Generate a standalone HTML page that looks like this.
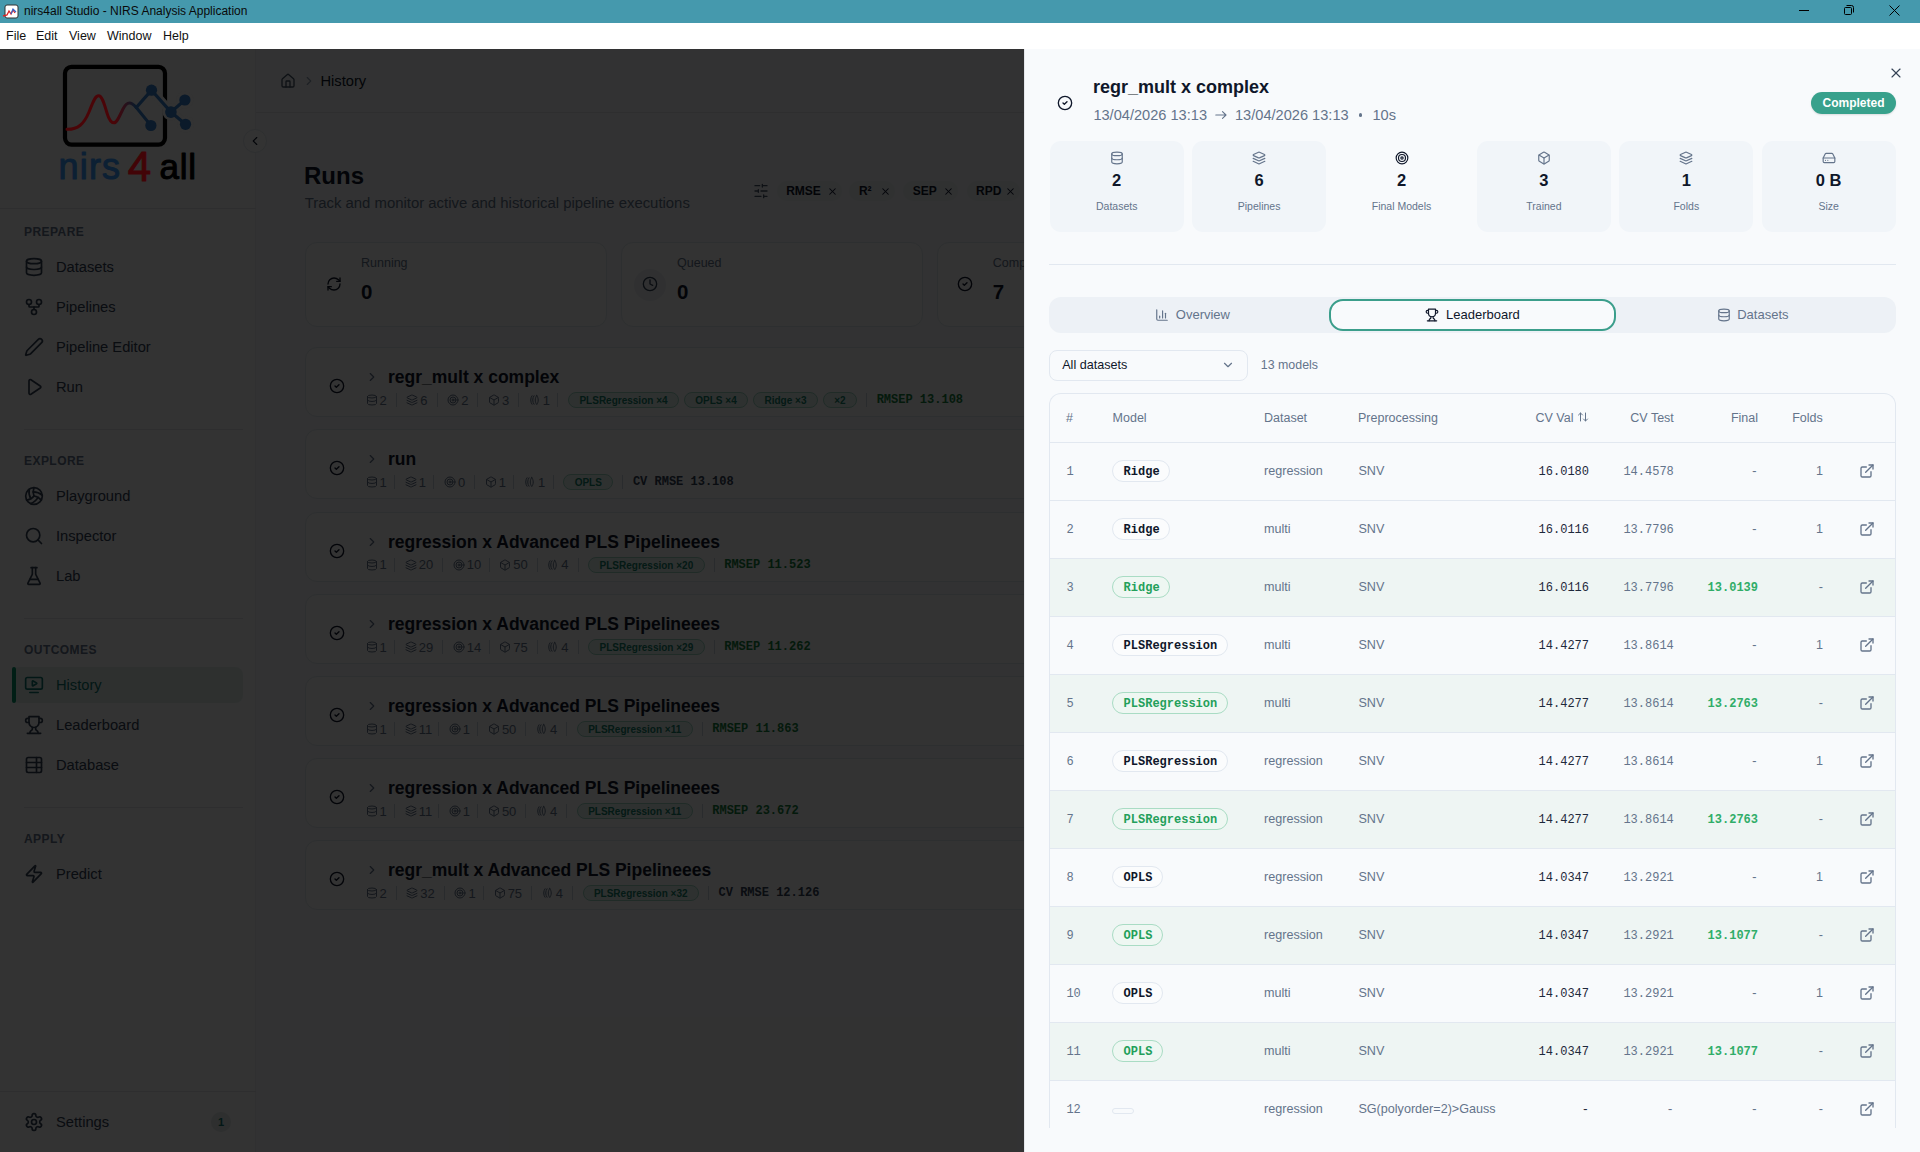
<!DOCTYPE html><html><head><meta charset="utf-8"><style>*{box-sizing:border-box;margin:0;padding:0}
html,body{width:1920px;height:1152px;overflow:hidden;background:#f8fafc;font-family:"Liberation Sans",sans-serif;color:#0f172a}
.abs{position:absolute}
svg{display:block;overflow:visible}
.ic{fill:none;stroke:currentColor;stroke-linecap:round;stroke-linejoin:round}
.mono{font-family:"Liberation Mono",monospace}
.tx{position:absolute;line-height:1;white-space:nowrap}
#titlebar{position:absolute;left:0;top:0;width:1920px;height:23px;background:#4599ad}
#titlebar .t{position:absolute;left:24px;top:5px;font-size:12px;line-height:1;color:#0a0a0a;white-space:nowrap}
#menubar{position:absolute;left:0;top:23px;width:1920px;height:26px;background:#fff}
#menubar span{position:absolute;top:7px;font-size:12.5px;line-height:1;color:#111}
#app{position:absolute;left:0;top:49px;width:1920px;height:1103px;background:#f8fafc;overflow:hidden}
#dim{position:absolute;left:0;top:0;width:1024px;height:1103px;background:rgba(0,0,0,0.8)}
#sidebar{position:absolute;left:0;top:0;width:256px;height:1103px;background:#fcfcfd;border-right:1px solid #edeff2}
.sec{position:absolute;left:24px;font-size:12px;line-height:1;font-weight:bold;letter-spacing:0.45px;color:#64748b}
.nav{position:absolute;left:24px;height:20px;width:220px;color:#1e293b}
.nav span{position:absolute;left:32px;top:3px;font-size:14.7px;line-height:1;white-space:nowrap}
.sep{position:absolute;left:24px;width:219px;height:1px;background:#e5e7eb}
.card{position:absolute;background:#fdfdfe;border:1px solid #e2e8f0;border-radius:12px}
.chip{position:absolute;height:20px;border-radius:10px;background:#eef2f6;font-size:12px;font-weight:bold;color:#0f172a}
.run .ttl{position:absolute;left:82px;top:21.2px;font-size:17.5px;line-height:1;font-weight:bold;white-space:nowrap;color:#0f172a}
.meta{position:absolute;left:59.5px;top:44px;height:16px;display:flex;align-items:center;white-space:nowrap;font-size:13px;color:#64748b}
.mi{display:flex;align-items:center;gap:2px}
.mi b{font-weight:normal;line-height:1}
.vs{display:block;width:1px;height:14px;background:#cbd5e1;margin:0 9.6px 0 9px}
.pill{display:block;height:16px;border-radius:8px;border:1px solid #9fd6c4;background:#e7f5ef;color:#15806a;font-size:10px;font-weight:bold;line-height:15.5px;padding:0 10.4px;margin-right:5px}
.metric{font-family:"Liberation Mono",monospace;font-weight:bold;font-size:12px;line-height:1}
#panel{position:absolute;left:1024px;top:0;width:896px;height:1103px;background:#f8fafc;border-left:1px solid #e2e8f0}
</style></head><body>
<div id="titlebar">
<svg class="abs" style="left:2px;top:4px;width:17px;height:15px" viewBox="0 0 17 15"><rect x="3" y="1" width="13" height="13" rx="2" fill="#fff" stroke="#333" stroke-width="1"/><path d="M1 12 L5 11 L7 7 L9 10 L11 6 L13 9" fill="none" stroke="#d22" stroke-width="1.3"/><path d="M9 10 L11 5 L14 8" fill="none" stroke="#36c" stroke-width="1.2"/></svg>
<div class="t">nirs4all Studio - NIRS Analysis Application</div>
<div class="abs" style="left:1799px;top:10px;width:10px;height:1px;background:#000"></div>
<svg class="abs" style="left:1843px;top:4px;width:12px;height:12px" viewBox="0 0 12 12"><rect x="1.5" y="3.5" width="7" height="7" rx="1" fill="none" stroke="#000" stroke-width="1"/><path d="M3.5 1.5h5a2 2 0 0 1 2 2v5" fill="none" stroke="#000" stroke-width="1"/></svg>
<svg class="abs" style="left:1889px;top:5px;width:11px;height:11px" viewBox="0 0 11 11"><path d="M0.5 0.5L10.5 10.5M10.5 0.5L0.5 10.5" stroke="#000" stroke-width="1"/></svg>
</div>
<div id="menubar"><span style="left:6px">File</span><span style="left:36px">Edit</span><span style="left:69px">View</span><span style="left:107px">Window</span><span style="left:163px">Help</span></div>
<div id="app">
<div id="sidebar">
<div class="abs" style="left:0;top:159px;width:256px;height:1px;background:#e5e7eb"></div>
<div class="sec" style="top:177.4px">PREPARE</div>
<div class="nav" style="top:208px;color:#334155"><svg class="abs ic" style="left:0px;top:0px;width:20px;height:20px;" viewBox="0 0 24 24" stroke-width="2"><ellipse cx="12" cy="5" rx="9" ry="3"/><path d="M3 5V19A9 3 0 0 0 21 19V5"/><path d="M3 12A9 3 0 0 0 21 12"/></svg><span>Datasets</span></div>
<div class="nav" style="top:248px;color:#334155"><svg class="abs ic" style="left:0px;top:0px;width:20px;height:20px;" viewBox="0 0 24 24" stroke-width="2"><circle cx="12" cy="18" r="3"/><circle cx="6" cy="6" r="3"/><circle cx="18" cy="6" r="3"/><path d="M18 9v2c0 .6-.4 1-1 1H7c-.6 0-1-.4-1-1V9"/><path d="M12 12v3"/></svg><span>Pipelines</span></div>
<div class="nav" style="top:288px;color:#334155"><svg class="abs ic" style="left:0px;top:0px;width:20px;height:20px;" viewBox="0 0 24 24" stroke-width="2"><path d="M21.174 6.812a1 1 0 0 0-3.986-3.987L3.842 16.174a2 2 0 0 0-.5.83l-1.321 4.352a.5.5 0 0 0 .623.622l4.353-1.32a2 2 0 0 0 .83-.497z"/></svg><span>Pipeline Editor</span></div>
<div class="nav" style="top:328px;color:#334155"><svg class="abs ic" style="left:0px;top:0px;width:20px;height:20px;" viewBox="0 0 24 24" stroke-width="2"><path d="M6 4.5a1.5 1.5 0 0 1 2.3-1.27l11.2 7.5a1.5 1.5 0 0 1 0 2.54l-11.2 7.5A1.5 1.5 0 0 1 6 19.5z"/></svg><span>Run</span></div>
<div class="sep" style="top:380px"></div>
<div class="sec" style="top:406.4px">EXPLORE</div>
<div class="nav" style="top:437px;color:#334155"><svg class="abs ic" style="left:0px;top:0px;width:20px;height:20px;" viewBox="0 0 24 24" stroke-width="2"><path d="M11.1 7.1a16.55 16.55 0 0 1 10.9 4"/><path d="M12 12a12.6 12.6 0 0 1-8.7 5"/><path d="M16.8 13.6a16.55 16.55 0 0 1-9 7.5"/><path d="M20.7 17a12.8 12.8 0 0 0-8.7-5 13.3 13.3 0 0 1 0-10"/><path d="M6.3 3.8a16.55 16.55 0 0 0 1.9 11.5"/><circle cx="12" cy="12" r="10"/></svg><span>Playground</span></div>
<div class="nav" style="top:477px;color:#334155"><svg class="abs ic" style="left:0px;top:0px;width:20px;height:20px;" viewBox="0 0 24 24" stroke-width="2"><circle cx="11" cy="11" r="8"/><path d="m21 21-4.3-4.3"/></svg><span>Inspector</span></div>
<div class="nav" style="top:517px;color:#334155"><svg class="abs ic" style="left:0px;top:0px;width:20px;height:20px;" viewBox="0 0 24 24" stroke-width="2"><path d="M10 2v7.527a2 2 0 0 1-.211.896L4.72 20.55a1 1 0 0 0 .9 1.45h12.76a1 1 0 0 0 .9-1.45l-5.069-10.127A2 2 0 0 1 14 9.527V2"/><path d="M8.5 2h7"/><path d="M7 16h10"/></svg><span>Lab</span></div>
<div class="sep" style="top:569px"></div>
<div class="sec" style="top:594.9px">OUTCOMES</div>
<div class="abs" style="left:12px;top:618px;width:231px;height:36px;border-radius:8px;background:#e3f1ec"></div>
<div class="abs" style="left:12px;top:618px;width:4px;height:36px;border-radius:2px;background:#059669"></div>
<div class="nav" style="top:626px;color:#0f766e"><svg class="abs ic" style="left:0px;top:0px;width:20px;height:20px;" viewBox="0 0 24 24" stroke-width="2"><path d="M15.033 9.44a.647.647 0 0 1 0 1.12l-4.065 2.352a.645.645 0 0 1-.968-.56V7.648a.646.646 0 0 1 .967-.56z"/><path d="M7 21h10"/><rect width="20" height="14" x="2" y="3" rx="2"/></svg><span>History</span></div>
<div class="nav" style="top:666px;color:#334155"><svg class="abs ic" style="left:0px;top:0px;width:20px;height:20px;" viewBox="0 0 24 24" stroke-width="2"><path d="M6 9H4.5a2.5 2.5 0 0 1 0-5H6"/><path d="M18 9h1.5a2.5 2.5 0 0 0 0-5H18"/><path d="M4 22h16"/><path d="M10 14.66V17c0 .55-.47.98-.97 1.21C7.85 18.75 7 20.24 7 22"/><path d="M14 14.66V17c0 .55.47.98.97 1.21C16.15 18.75 17 20.24 17 22"/><path d="M18 2H6v7a6 6 0 0 0 12 0V2Z"/></svg><span>Leaderboard</span></div>
<div class="nav" style="top:706px;color:#334155"><svg class="abs ic" style="left:0px;top:0px;width:20px;height:20px;" viewBox="0 0 24 24" stroke-width="2"><path d="M15 3v18"/><rect width="18" height="18" x="3" y="3" rx="2"/><path d="M21 9H3"/><path d="M21 15H3"/></svg><span>Database</span></div>
<div class="sep" style="top:758px"></div>
<div class="sec" style="top:784.4px">APPLY</div>
<div class="nav" style="top:815px;color:#334155"><svg class="abs ic" style="left:0px;top:0px;width:20px;height:20px;" viewBox="0 0 24 24" stroke-width="2"><path d="M4 14a1 1 0 0 1-.78-1.63l9.9-10.2a.5.5 0 0 1 .86.46l-1.92 6.02A1 1 0 0 0 13 10h7a1 1 0 0 1 .78 1.63l-9.9 10.2a.5.5 0 0 1-.86-.46l1.92-6.02A1 1 0 0 0 11 14z"/></svg><span>Predict</span></div>
<div class="abs" style="left:0;top:1042px;width:256px;height:1px;background:#e5e7eb"></div>
<div class="nav" style="top:1063px;color:#334155"><svg class="abs ic" style="left:0px;top:0px;width:20px;height:20px;" viewBox="0 0 24 24" stroke-width="2"><path d="M12.22 2h-.44a2 2 0 0 0-2 2v.18a2 2 0 0 1-1 1.73l-.43.25a2 2 0 0 1-2 0l-.15-.08a2 2 0 0 0-2.73.73l-.22.38a2 2 0 0 0 .73 2.73l.15.1a2 2 0 0 1 1 1.72v.51a2 2 0 0 1-1 1.74l-.15.09a2 2 0 0 0-.73 2.73l.22.38a2 2 0 0 0 2.73.73l.15-.08a2 2 0 0 1 2 0l.43.25a2 2 0 0 1 1 1.73V20a2 2 0 0 0 2 2h.44a2 2 0 0 0 2-2v-.18a2 2 0 0 1 1-1.73l.43-.25a2 2 0 0 1 2 0l.15.08a2 2 0 0 0 2.73-.73l.22-.39a2 2 0 0 0-.73-2.73l-.15-.08a2 2 0 0 1-1-1.74v-.5a2 2 0 0 1 1-1.74l.15-.09a2 2 0 0 0 .73-2.73l-.22-.38a2 2 0 0 0-2.73-.73l-.15.08a2 2 0 0 1-2 0l-.43-.25a2 2 0 0 1-1-1.73V4a2 2 0 0 0-2-2z"/><circle cx="12" cy="12" r="3"/></svg><span>Settings</span></div>
<div class="abs" style="left:211px;top:1063px;width:20px;height:20px;border-radius:10px;background:#e3e9e8;font-size:11px;font-weight:bold;text-align:center;line-height:20px;color:#0f766e">1</div>
</div>
<div class="abs" style="left:243px;top:80px;width:24px;height:24px;border-radius:12px;background:#fff;border:1px solid #e2e8f0"></div>
<svg class="abs ic" style="left:248px;top:85px;width:14px;height:14px;color:#0f172a;" viewBox="0 0 24 24" stroke-width="2"><path d="m15 18-6-6 6-6"/></svg>
<div class="abs" style="left:256px;top:63px;width:800px;height:1px;background:#e5e7eb"></div>
<svg class="abs ic" style="left:280px;top:23.5px;width:16px;height:16px;color:#475569;" viewBox="0 0 24 24" stroke-width="2"><path d="M15 21v-8a1 1 0 0 0-1-1h-4a1 1 0 0 0-1 1v8"/><path d="M3 10a2 2 0 0 1 .709-1.528l7-5.999a2 2 0 0 1 2.582 0l7 5.999A2 2 0 0 1 21 10v9a2 2 0 0 1-2 2H5a2 2 0 0 1-2-2z"/></svg>
<svg class="abs ic" style="left:302px;top:25px;width:14px;height:14px;color:#94a3b8;" viewBox="0 0 24 24" stroke-width="2"><path d="m9 18 6-6-6-6"/></svg>
<div class="abs" style="left:320.5px;top:24px;font-size:14.7px;color:#0f172a;white-space:nowrap">History</div>
<div class="abs" style="left:304px;top:113px;font-size:24px;font-weight:bold;color:#0f172a;white-space:nowrap">Runs</div>
<div class="abs" style="left:304.7px;top:146px;font-size:14.9px;color:#64748b;white-space:nowrap">Track and monitor active and historical pipeline executions</div>
<svg class="abs ic" style="left:752.5px;top:134px;width:16px;height:16px;color:#475569;" viewBox="0 0 24 24" stroke-width="2"><path d="M21 4h-7M10 4H3M21 12h-9M8 12H3M21 20h-5M12 20H3M14 2v4M8 10v4M16 18v4"/></svg>
<div class="chip" style="left:776.7px;top:132px;width:65.59999999999991px"><span style="position:absolute;left:9.5px;top:3px">RMSE</span><svg class="abs ic" style="left:50.29999999999991px;top:4.5px;width:11px;height:11px;color:#0f172a;" viewBox="0 0 24 24" stroke-width="2.2"><path d="M18 6 6 18"/><path d="m6 6 12 12"/></svg></div>
<div class="chip" style="left:849.4px;top:132px;width:46.10000000000002px"><span style="position:absolute;left:9.5px;top:3px">R²</span><svg class="abs ic" style="left:30.800000000000022px;top:4.5px;width:11px;height:11px;color:#0f172a;" viewBox="0 0 24 24" stroke-width="2.2"><path d="M18 6 6 18"/><path d="m6 6 12 12"/></svg></div>
<div class="chip" style="left:903.3px;top:132px;width:54.700000000000045px"><span style="position:absolute;left:9.5px;top:3px">SEP</span><svg class="abs ic" style="left:39.40000000000005px;top:4.5px;width:11px;height:11px;color:#0f172a;" viewBox="0 0 24 24" stroke-width="2.2"><path d="M18 6 6 18"/><path d="m6 6 12 12"/></svg></div>
<div class="chip" style="left:966.6px;top:132px;width:53.89999999999998px"><span style="position:absolute;left:9.5px;top:3px">RPD</span><svg class="abs ic" style="left:38.59999999999998px;top:4.5px;width:11px;height:11px;color:#0f172a;" viewBox="0 0 24 24" stroke-width="2.2"><path d="M18 6 6 18"/><path d="m6 6 12 12"/></svg></div>
<div class="card" style="left:305px;top:193px;width:302px;height:84.5px">
<svg class="abs ic" style="left:19.5px;top:32.5px;width:16px;height:16px;color:#0f172a;" viewBox="0 0 24 24" stroke-width="2"><path d="M3 12a9 9 0 0 1 9-9 9.75 9.75 0 0 1 6.74 2.74L21 8"/><path d="M21 3v5h-5"/><path d="M21 12a9 9 0 0 1-9 9 9.75 9.75 0 0 1-6.74-2.74L3 16"/><path d="M8 16H3v5"/></svg>
<div class="abs" style="left:55px;top:13px;font-size:12.5px;color:#64748b">Running</div>
<div class="abs" style="left:55px;top:37px;font-size:20.5px;font-weight:bold;color:#0f172a">0</div>
</div>
<div class="card" style="left:621px;top:193px;width:302px;height:84.5px">
<div class="abs" style="left:12px;top:25.5px;width:32px;height:32px;border-radius:16px;background:#eef1f5"></div>
<svg class="abs ic" style="left:19.5px;top:32.5px;width:16px;height:16px;color:#334155;" viewBox="0 0 24 24" stroke-width="2"><circle cx="12" cy="12" r="10"/><path d="M12 6v6l4 2"/></svg>
<div class="abs" style="left:55px;top:13px;font-size:12.5px;color:#64748b">Queued</div>
<div class="abs" style="left:55px;top:37px;font-size:20.5px;font-weight:bold;color:#0f172a">0</div>
</div>
<div class="card" style="left:936.8px;top:193px;width:302px;height:84.5px">
<svg class="abs ic" style="left:19.5px;top:32.5px;width:16px;height:16px;color:#0f172a;" viewBox="0 0 24 24" stroke-width="2"><circle cx="12" cy="12" r="10"/><path d="m9 12 2 2 4-4"/></svg>
<div class="abs" style="left:55px;top:13px;font-size:12.5px;color:#64748b">Completed</div>
<div class="abs" style="left:55px;top:37px;font-size:20.5px;font-weight:bold;color:#0f172a">7</div>
</div>
<div class="card run" style="left:305px;top:298px;width:900px;height:70px">
<svg class="abs ic" style="left:23px;top:30px;width:16px;height:16px;color:#0f172a;" viewBox="0 0 24 24" stroke-width="2"><circle cx="12" cy="12" r="10"/><path d="m9 12 2 2 4-4"/></svg>
<svg class="abs ic" style="left:59px;top:22px;width:14px;height:14px;color:#64748b;" viewBox="0 0 24 24" stroke-width="2"><path d="m9 18 6-6-6-6"/></svg>
<div class="ttl">regr_mult x complex</div>
<div class="meta">
<span class="mi"><svg class="ic" style="width:12px;height:12px" viewBox="0 0 24 24" stroke-width="2"><ellipse cx="12" cy="5" rx="9" ry="3"/><path d="M3 5V19A9 3 0 0 0 21 19V5"/><path d="M3 12A9 3 0 0 0 21 12"/></svg><b style="margin-right:-0.0px">2</b></span><i class="vs"></i>
<span class="mi"><svg class="ic" style="width:12px;height:12px" viewBox="0 0 24 24" stroke-width="2"><path d="M12.83 2.18a2 2 0 0 0-1.66 0L2.6 6.08a1 1 0 0 0 0 1.83l8.58 3.91a2 2 0 0 0 1.66 0l8.58-3.9a1 1 0 0 0 0-1.83Z"/><path d="m22 17.65-9.17 4.16a2 2 0 0 1-1.66 0L2 17.65"/><path d="m22 12.65-9.17 4.16a2 2 0 0 1-1.66 0L2 12.65"/></svg><b style="margin-right:-0.0px">6</b></span><i class="vs"></i>
<span class="mi"><svg class="ic" style="width:12px;height:12px" viewBox="0 0 24 24" stroke-width="2"><circle cx="12" cy="12" r="10"/><circle cx="12" cy="12" r="6"/><circle cx="12" cy="12" r="2"/></svg><b style="margin-right:-0.0px">2</b></span><i class="vs"></i>
<span class="mi"><svg class="ic" style="width:12px;height:12px" viewBox="0 0 24 24" stroke-width="2"><path d="M21 8a2 2 0 0 0-1-1.73l-7-4a2 2 0 0 0-2 0l-7 4A2 2 0 0 0 3 8v8a2 2 0 0 0 1 1.73l7 4a2 2 0 0 0 2 0l7-4A2 2 0 0 0 21 16Z"/><path d="m3.3 7 8.7 5 8.7-5"/><path d="M12 22V12"/></svg><b style="margin-right:-0.0px">3</b></span><i class="vs"></i>
<span class="mi"><svg class="ic" style="width:12px;height:12px" viewBox="0 0 24 24" stroke-width="2"><path d="M6 3.5C2.5 8 2.5 16 6 20.5"/><path d="M10 3.5C6.5 8 6.5 16 10 20.5"/><path d="M15.5 3C11.5 8 11.5 16 15.5 21C19.5 16 19.5 8 15.5 3z"/></svg><b style="margin-right:-1.6px">1</b></span><i class="vs"></i>
<span class="pill" style="margin-right:5px">PLSRegression ×4</span>
<span class="pill" style="margin-right:5px">OPLS ×4</span>
<span class="pill" style="margin-right:5px">Ridge ×3</span>
<span class="pill" style="margin-right:0px">×2</span>
<i class="vs"></i><span class="metric" style="color:#15803d">RMSEP 13.108</span>
</div></div>
<div class="card run" style="left:305px;top:380px;width:900px;height:70px">
<svg class="abs ic" style="left:23px;top:30px;width:16px;height:16px;color:#0f172a;" viewBox="0 0 24 24" stroke-width="2"><circle cx="12" cy="12" r="10"/><path d="m9 12 2 2 4-4"/></svg>
<svg class="abs ic" style="left:59px;top:22px;width:14px;height:14px;color:#64748b;" viewBox="0 0 24 24" stroke-width="2"><path d="m9 18 6-6-6-6"/></svg>
<div class="ttl">run</div>
<div class="meta">
<span class="mi"><svg class="ic" style="width:12px;height:12px" viewBox="0 0 24 24" stroke-width="2"><ellipse cx="12" cy="5" rx="9" ry="3"/><path d="M3 5V19A9 3 0 0 0 21 19V5"/><path d="M3 12A9 3 0 0 0 21 12"/></svg><b style="margin-right:-1.6px">1</b></span><i class="vs"></i>
<span class="mi"><svg class="ic" style="width:12px;height:12px" viewBox="0 0 24 24" stroke-width="2"><path d="M12.83 2.18a2 2 0 0 0-1.66 0L2.6 6.08a1 1 0 0 0 0 1.83l8.58 3.91a2 2 0 0 0 1.66 0l8.58-3.9a1 1 0 0 0 0-1.83Z"/><path d="m22 17.65-9.17 4.16a2 2 0 0 1-1.66 0L2 17.65"/><path d="m22 12.65-9.17 4.16a2 2 0 0 1-1.66 0L2 12.65"/></svg><b style="margin-right:-1.6px">1</b></span><i class="vs"></i>
<span class="mi"><svg class="ic" style="width:12px;height:12px" viewBox="0 0 24 24" stroke-width="2"><circle cx="12" cy="12" r="10"/><circle cx="12" cy="12" r="6"/><circle cx="12" cy="12" r="2"/></svg><b style="margin-right:-0.0px">0</b></span><i class="vs"></i>
<span class="mi"><svg class="ic" style="width:12px;height:12px" viewBox="0 0 24 24" stroke-width="2"><path d="M21 8a2 2 0 0 0-1-1.73l-7-4a2 2 0 0 0-2 0l-7 4A2 2 0 0 0 3 8v8a2 2 0 0 0 1 1.73l7 4a2 2 0 0 0 2 0l7-4A2 2 0 0 0 21 16Z"/><path d="m3.3 7 8.7 5 8.7-5"/><path d="M12 22V12"/></svg><b style="margin-right:-1.6px">1</b></span><i class="vs"></i>
<span class="mi"><svg class="ic" style="width:12px;height:12px" viewBox="0 0 24 24" stroke-width="2"><path d="M6 3.5C2.5 8 2.5 16 6 20.5"/><path d="M10 3.5C6.5 8 6.5 16 10 20.5"/><path d="M15.5 3C11.5 8 11.5 16 15.5 21C19.5 16 19.5 8 15.5 3z"/></svg><b style="margin-right:-1.6px">1</b></span><i class="vs"></i>
<span class="pill" style="margin-right:0px">OPLS</span>
<i class="vs"></i><span class="metric" style="color:#334155">CV RMSE 13.108</span>
</div></div>
<div class="card run" style="left:305px;top:462.5px;width:900px;height:70px">
<svg class="abs ic" style="left:23px;top:30px;width:16px;height:16px;color:#0f172a;" viewBox="0 0 24 24" stroke-width="2"><circle cx="12" cy="12" r="10"/><path d="m9 12 2 2 4-4"/></svg>
<svg class="abs ic" style="left:59px;top:22px;width:14px;height:14px;color:#64748b;" viewBox="0 0 24 24" stroke-width="2"><path d="m9 18 6-6-6-6"/></svg>
<div class="ttl">regression x Advanced PLS Pipelineees</div>
<div class="meta">
<span class="mi"><svg class="ic" style="width:12px;height:12px" viewBox="0 0 24 24" stroke-width="2"><ellipse cx="12" cy="5" rx="9" ry="3"/><path d="M3 5V19A9 3 0 0 0 21 19V5"/><path d="M3 12A9 3 0 0 0 21 12"/></svg><b style="margin-right:-1.6px">1</b></span><i class="vs"></i>
<span class="mi"><svg class="ic" style="width:12px;height:12px" viewBox="0 0 24 24" stroke-width="2"><path d="M12.83 2.18a2 2 0 0 0-1.66 0L2.6 6.08a1 1 0 0 0 0 1.83l8.58 3.91a2 2 0 0 0 1.66 0l8.58-3.9a1 1 0 0 0 0-1.83Z"/><path d="m22 17.65-9.17 4.16a2 2 0 0 1-1.66 0L2 17.65"/><path d="m22 12.65-9.17 4.16a2 2 0 0 1-1.66 0L2 12.65"/></svg><b style="margin-right:-0.0px">20</b></span><i class="vs"></i>
<span class="mi"><svg class="ic" style="width:12px;height:12px" viewBox="0 0 24 24" stroke-width="2"><circle cx="12" cy="12" r="10"/><circle cx="12" cy="12" r="6"/><circle cx="12" cy="12" r="2"/></svg><b style="margin-right:-1.6px">10</b></span><i class="vs"></i>
<span class="mi"><svg class="ic" style="width:12px;height:12px" viewBox="0 0 24 24" stroke-width="2"><path d="M21 8a2 2 0 0 0-1-1.73l-7-4a2 2 0 0 0-2 0l-7 4A2 2 0 0 0 3 8v8a2 2 0 0 0 1 1.73l7 4a2 2 0 0 0 2 0l7-4A2 2 0 0 0 21 16Z"/><path d="m3.3 7 8.7 5 8.7-5"/><path d="M12 22V12"/></svg><b style="margin-right:-0.0px">50</b></span><i class="vs"></i>
<span class="mi"><svg class="ic" style="width:12px;height:12px" viewBox="0 0 24 24" stroke-width="2"><path d="M6 3.5C2.5 8 2.5 16 6 20.5"/><path d="M10 3.5C6.5 8 6.5 16 10 20.5"/><path d="M15.5 3C11.5 8 11.5 16 15.5 21C19.5 16 19.5 8 15.5 3z"/></svg><b style="margin-right:-0.0px">4</b></span><i class="vs"></i>
<span class="pill" style="margin-right:0px">PLSRegression ×20</span>
<i class="vs"></i><span class="metric" style="color:#15803d">RMSEP 11.523</span>
</div></div>
<div class="card run" style="left:305px;top:545px;width:900px;height:70px">
<svg class="abs ic" style="left:23px;top:30px;width:16px;height:16px;color:#0f172a;" viewBox="0 0 24 24" stroke-width="2"><circle cx="12" cy="12" r="10"/><path d="m9 12 2 2 4-4"/></svg>
<svg class="abs ic" style="left:59px;top:22px;width:14px;height:14px;color:#64748b;" viewBox="0 0 24 24" stroke-width="2"><path d="m9 18 6-6-6-6"/></svg>
<div class="ttl">regression x Advanced PLS Pipelineees</div>
<div class="meta">
<span class="mi"><svg class="ic" style="width:12px;height:12px" viewBox="0 0 24 24" stroke-width="2"><ellipse cx="12" cy="5" rx="9" ry="3"/><path d="M3 5V19A9 3 0 0 0 21 19V5"/><path d="M3 12A9 3 0 0 0 21 12"/></svg><b style="margin-right:-1.6px">1</b></span><i class="vs"></i>
<span class="mi"><svg class="ic" style="width:12px;height:12px" viewBox="0 0 24 24" stroke-width="2"><path d="M12.83 2.18a2 2 0 0 0-1.66 0L2.6 6.08a1 1 0 0 0 0 1.83l8.58 3.91a2 2 0 0 0 1.66 0l8.58-3.9a1 1 0 0 0 0-1.83Z"/><path d="m22 17.65-9.17 4.16a2 2 0 0 1-1.66 0L2 17.65"/><path d="m22 12.65-9.17 4.16a2 2 0 0 1-1.66 0L2 12.65"/></svg><b style="margin-right:-0.0px">29</b></span><i class="vs"></i>
<span class="mi"><svg class="ic" style="width:12px;height:12px" viewBox="0 0 24 24" stroke-width="2"><circle cx="12" cy="12" r="10"/><circle cx="12" cy="12" r="6"/><circle cx="12" cy="12" r="2"/></svg><b style="margin-right:-1.6px">14</b></span><i class="vs"></i>
<span class="mi"><svg class="ic" style="width:12px;height:12px" viewBox="0 0 24 24" stroke-width="2"><path d="M21 8a2 2 0 0 0-1-1.73l-7-4a2 2 0 0 0-2 0l-7 4A2 2 0 0 0 3 8v8a2 2 0 0 0 1 1.73l7 4a2 2 0 0 0 2 0l7-4A2 2 0 0 0 21 16Z"/><path d="m3.3 7 8.7 5 8.7-5"/><path d="M12 22V12"/></svg><b style="margin-right:-0.0px">75</b></span><i class="vs"></i>
<span class="mi"><svg class="ic" style="width:12px;height:12px" viewBox="0 0 24 24" stroke-width="2"><path d="M6 3.5C2.5 8 2.5 16 6 20.5"/><path d="M10 3.5C6.5 8 6.5 16 10 20.5"/><path d="M15.5 3C11.5 8 11.5 16 15.5 21C19.5 16 19.5 8 15.5 3z"/></svg><b style="margin-right:-0.0px">4</b></span><i class="vs"></i>
<span class="pill" style="margin-right:0px">PLSRegression ×29</span>
<i class="vs"></i><span class="metric" style="color:#15803d">RMSEP 11.262</span>
</div></div>
<div class="card run" style="left:305px;top:627px;width:900px;height:70px">
<svg class="abs ic" style="left:23px;top:30px;width:16px;height:16px;color:#0f172a;" viewBox="0 0 24 24" stroke-width="2"><circle cx="12" cy="12" r="10"/><path d="m9 12 2 2 4-4"/></svg>
<svg class="abs ic" style="left:59px;top:22px;width:14px;height:14px;color:#64748b;" viewBox="0 0 24 24" stroke-width="2"><path d="m9 18 6-6-6-6"/></svg>
<div class="ttl">regression x Advanced PLS Pipelineees</div>
<div class="meta">
<span class="mi"><svg class="ic" style="width:12px;height:12px" viewBox="0 0 24 24" stroke-width="2"><ellipse cx="12" cy="5" rx="9" ry="3"/><path d="M3 5V19A9 3 0 0 0 21 19V5"/><path d="M3 12A9 3 0 0 0 21 12"/></svg><b style="margin-right:-1.6px">1</b></span><i class="vs"></i>
<span class="mi"><svg class="ic" style="width:12px;height:12px" viewBox="0 0 24 24" stroke-width="2"><path d="M12.83 2.18a2 2 0 0 0-1.66 0L2.6 6.08a1 1 0 0 0 0 1.83l8.58 3.91a2 2 0 0 0 1.66 0l8.58-3.9a1 1 0 0 0 0-1.83Z"/><path d="m22 17.65-9.17 4.16a2 2 0 0 1-1.66 0L2 17.65"/><path d="m22 12.65-9.17 4.16a2 2 0 0 1-1.66 0L2 12.65"/></svg><b style="margin-right:-3.2px">11</b></span><i class="vs"></i>
<span class="mi"><svg class="ic" style="width:12px;height:12px" viewBox="0 0 24 24" stroke-width="2"><circle cx="12" cy="12" r="10"/><circle cx="12" cy="12" r="6"/><circle cx="12" cy="12" r="2"/></svg><b style="margin-right:-1.6px">1</b></span><i class="vs"></i>
<span class="mi"><svg class="ic" style="width:12px;height:12px" viewBox="0 0 24 24" stroke-width="2"><path d="M21 8a2 2 0 0 0-1-1.73l-7-4a2 2 0 0 0-2 0l-7 4A2 2 0 0 0 3 8v8a2 2 0 0 0 1 1.73l7 4a2 2 0 0 0 2 0l7-4A2 2 0 0 0 21 16Z"/><path d="m3.3 7 8.7 5 8.7-5"/><path d="M12 22V12"/></svg><b style="margin-right:-0.0px">50</b></span><i class="vs"></i>
<span class="mi"><svg class="ic" style="width:12px;height:12px" viewBox="0 0 24 24" stroke-width="2"><path d="M6 3.5C2.5 8 2.5 16 6 20.5"/><path d="M10 3.5C6.5 8 6.5 16 10 20.5"/><path d="M15.5 3C11.5 8 11.5 16 15.5 21C19.5 16 19.5 8 15.5 3z"/></svg><b style="margin-right:-0.0px">4</b></span><i class="vs"></i>
<span class="pill" style="margin-right:0px">PLSRegression ×11</span>
<i class="vs"></i><span class="metric" style="color:#15803d">RMSEP 11.863</span>
</div></div>
<div class="card run" style="left:305px;top:709px;width:900px;height:70px">
<svg class="abs ic" style="left:23px;top:30px;width:16px;height:16px;color:#0f172a;" viewBox="0 0 24 24" stroke-width="2"><circle cx="12" cy="12" r="10"/><path d="m9 12 2 2 4-4"/></svg>
<svg class="abs ic" style="left:59px;top:22px;width:14px;height:14px;color:#64748b;" viewBox="0 0 24 24" stroke-width="2"><path d="m9 18 6-6-6-6"/></svg>
<div class="ttl">regression x Advanced PLS Pipelineees</div>
<div class="meta">
<span class="mi"><svg class="ic" style="width:12px;height:12px" viewBox="0 0 24 24" stroke-width="2"><ellipse cx="12" cy="5" rx="9" ry="3"/><path d="M3 5V19A9 3 0 0 0 21 19V5"/><path d="M3 12A9 3 0 0 0 21 12"/></svg><b style="margin-right:-1.6px">1</b></span><i class="vs"></i>
<span class="mi"><svg class="ic" style="width:12px;height:12px" viewBox="0 0 24 24" stroke-width="2"><path d="M12.83 2.18a2 2 0 0 0-1.66 0L2.6 6.08a1 1 0 0 0 0 1.83l8.58 3.91a2 2 0 0 0 1.66 0l8.58-3.9a1 1 0 0 0 0-1.83Z"/><path d="m22 17.65-9.17 4.16a2 2 0 0 1-1.66 0L2 17.65"/><path d="m22 12.65-9.17 4.16a2 2 0 0 1-1.66 0L2 12.65"/></svg><b style="margin-right:-3.2px">11</b></span><i class="vs"></i>
<span class="mi"><svg class="ic" style="width:12px;height:12px" viewBox="0 0 24 24" stroke-width="2"><circle cx="12" cy="12" r="10"/><circle cx="12" cy="12" r="6"/><circle cx="12" cy="12" r="2"/></svg><b style="margin-right:-1.6px">1</b></span><i class="vs"></i>
<span class="mi"><svg class="ic" style="width:12px;height:12px" viewBox="0 0 24 24" stroke-width="2"><path d="M21 8a2 2 0 0 0-1-1.73l-7-4a2 2 0 0 0-2 0l-7 4A2 2 0 0 0 3 8v8a2 2 0 0 0 1 1.73l7 4a2 2 0 0 0 2 0l7-4A2 2 0 0 0 21 16Z"/><path d="m3.3 7 8.7 5 8.7-5"/><path d="M12 22V12"/></svg><b style="margin-right:-0.0px">50</b></span><i class="vs"></i>
<span class="mi"><svg class="ic" style="width:12px;height:12px" viewBox="0 0 24 24" stroke-width="2"><path d="M6 3.5C2.5 8 2.5 16 6 20.5"/><path d="M10 3.5C6.5 8 6.5 16 10 20.5"/><path d="M15.5 3C11.5 8 11.5 16 15.5 21C19.5 16 19.5 8 15.5 3z"/></svg><b style="margin-right:-0.0px">4</b></span><i class="vs"></i>
<span class="pill" style="margin-right:0px">PLSRegression ×11</span>
<i class="vs"></i><span class="metric" style="color:#15803d">RMSEP 23.672</span>
</div></div>
<div class="card run" style="left:305px;top:791px;width:900px;height:70px">
<svg class="abs ic" style="left:23px;top:30px;width:16px;height:16px;color:#0f172a;" viewBox="0 0 24 24" stroke-width="2"><circle cx="12" cy="12" r="10"/><path d="m9 12 2 2 4-4"/></svg>
<svg class="abs ic" style="left:59px;top:22px;width:14px;height:14px;color:#64748b;" viewBox="0 0 24 24" stroke-width="2"><path d="m9 18 6-6-6-6"/></svg>
<div class="ttl">regr_mult x Advanced PLS Pipelineees</div>
<div class="meta">
<span class="mi"><svg class="ic" style="width:12px;height:12px" viewBox="0 0 24 24" stroke-width="2"><ellipse cx="12" cy="5" rx="9" ry="3"/><path d="M3 5V19A9 3 0 0 0 21 19V5"/><path d="M3 12A9 3 0 0 0 21 12"/></svg><b style="margin-right:-0.0px">2</b></span><i class="vs"></i>
<span class="mi"><svg class="ic" style="width:12px;height:12px" viewBox="0 0 24 24" stroke-width="2"><path d="M12.83 2.18a2 2 0 0 0-1.66 0L2.6 6.08a1 1 0 0 0 0 1.83l8.58 3.91a2 2 0 0 0 1.66 0l8.58-3.9a1 1 0 0 0 0-1.83Z"/><path d="m22 17.65-9.17 4.16a2 2 0 0 1-1.66 0L2 17.65"/><path d="m22 12.65-9.17 4.16a2 2 0 0 1-1.66 0L2 12.65"/></svg><b style="margin-right:-0.0px">32</b></span><i class="vs"></i>
<span class="mi"><svg class="ic" style="width:12px;height:12px" viewBox="0 0 24 24" stroke-width="2"><circle cx="12" cy="12" r="10"/><circle cx="12" cy="12" r="6"/><circle cx="12" cy="12" r="2"/></svg><b style="margin-right:-1.6px">1</b></span><i class="vs"></i>
<span class="mi"><svg class="ic" style="width:12px;height:12px" viewBox="0 0 24 24" stroke-width="2"><path d="M21 8a2 2 0 0 0-1-1.73l-7-4a2 2 0 0 0-2 0l-7 4A2 2 0 0 0 3 8v8a2 2 0 0 0 1 1.73l7 4a2 2 0 0 0 2 0l7-4A2 2 0 0 0 21 16Z"/><path d="m3.3 7 8.7 5 8.7-5"/><path d="M12 22V12"/></svg><b style="margin-right:-0.0px">75</b></span><i class="vs"></i>
<span class="mi"><svg class="ic" style="width:12px;height:12px" viewBox="0 0 24 24" stroke-width="2"><path d="M6 3.5C2.5 8 2.5 16 6 20.5"/><path d="M10 3.5C6.5 8 6.5 16 10 20.5"/><path d="M15.5 3C11.5 8 11.5 16 15.5 21C19.5 16 19.5 8 15.5 3z"/></svg><b style="margin-right:-0.0px">4</b></span><i class="vs"></i>
<span class="pill" style="margin-right:0px">PLSRegression ×32</span>
<i class="vs"></i><span class="metric" style="color:#334155">CV RMSE 12.126</span>
</div></div>
<div id="dim"></div>
</div>
<svg class="abs" style="left:0;top:49px;width:256px;height:160px" viewBox="0 49 256 160">
<defs><linearGradient id="wg" x1="60" y1="0" x2="190" y2="0" gradientUnits="userSpaceOnUse"><stop offset="0.42" stop-color="#4a0508"/><stop offset="0.58" stop-color="#0b1a2a"/></linearGradient></defs>
<rect x="65" y="66.8" width="100" height="77.8" rx="6.5" fill="none" stroke="#000" stroke-width="4.2"/>
<g stroke="#333333" stroke-width="9" stroke-linecap="round" fill="none">
<path d="M151.5 90.2 L170.9 112.1 L184.9 100 M170.9 112.1 L185.5 124.3"/>
</g>
<g fill="#333333"><circle cx="170.9" cy="112.1" r="8.5"/><circle cx="184.9" cy="100" r="8.5"/><circle cx="185.5" cy="124.3" r="8.5"/></g>
<path d="M67 129.3 C78 129.5 84 124 89 112 C93 102 95 95.7 98.6 95.7 C102 95.7 104 103 107 113 C109 120 111 122.8 114 122.8 C117 122.8 120 115 123 109 C125 105 127 103 129.5 103 C132 103 134 105 136.3 107.5 L150.9 125.5" fill="none" stroke="url(#wg)" stroke-width="3" stroke-linecap="round"/>
<g stroke="#0b1a2a" stroke-width="3.2" stroke-linecap="round" fill="none">
<path d="M136.3 107.5 L151.5 90.2 L170.9 112.1 L184.9 100 M170.9 112.1 L185.5 124.3"/>
</g>
<g fill="#0b1a2a"><circle cx="151.5" cy="90.2" r="5.6"/><circle cx="150.9" cy="125.5" r="5.6"/><circle cx="170.9" cy="112.1" r="5.8"/><circle cx="184.9" cy="100" r="5.6"/><circle cx="185.5" cy="124.3" r="5.6"/></g>
<text x="58.5" y="179" font-family="Liberation Sans" font-size="36" letter-spacing="1.2" fill="#0c2034" stroke="#0c2034" stroke-width="1" stroke-linejoin="round">nirs</text>
<text x="127.8" y="181" font-family="Liberation Sans" font-size="42" fill="#420407" stroke="#420407" stroke-width="1" stroke-linejoin="round">4</text>
<text x="159.5" y="179" font-family="Liberation Sans" font-size="35" letter-spacing="0.8" fill="#000" stroke="#000" stroke-width="1" stroke-linejoin="round">all</text>
</svg>
<div class="abs" style="left:1024px;top:49px;width:896px;height:1103px;background:#f8fafc;border-left:1px solid #e5e7eb"></div>
<svg class="abs ic" style="left:1057px;top:94.75px;width:16px;height:16px;color:#0f172a;" viewBox="0 0 24 24" stroke-width="2"><circle cx="12" cy="12" r="10"/><path d="m9 12 2 2 4-4"/></svg>
<div class="tx" style="left:1093px;top:78.46px;font-size:18px;color:#0f172a;font-weight:bold;">regr_mult x complex</div>
<div class="tx" style="left:1093.4px;top:107.94px;font-size:14.6px;color:#64748b;font-weight:normal;">13/04/2026 13:13</div>
<div class="tx" style="left:1235px;top:107.94px;font-size:14.6px;color:#64748b;font-weight:normal;">13/04/2026 13:13</div>
<div class="tx" style="left:1372.5px;top:107.94px;font-size:14.6px;color:#64748b;font-weight:normal;">10s</div>
<svg class="abs" style="left:1214.5px;top:110px;width:12px;height:10px" viewBox="0 0 12 10"><path d="M0.8 5H11M7.5 1.6L11 5L7.5 8.4" fill="none" stroke="#64748b" stroke-width="1.1" stroke-linecap="round" stroke-linejoin="round"/></svg>
<div class="abs" style="left:1358.6px;top:113.3px;width:3.8px;height:3.8px;border-radius:2px;background:#64748b"></div>
<div class="abs" style="left:1811px;top:92px;width:85px;height:22px;border-radius:11px;background:#38a18c;box-shadow:0 1px 2px rgba(0,0,0,0.12)"></div>
<div class="tx" style="left:1703.5px;width:300px;text-align:center;top:97.24px;font-size:12px;color:#ffffff;font-weight:bold;">Completed</div>
<svg class="abs ic" style="left:1888px;top:64.5px;width:16px;height:16px;color:#334155;" viewBox="0 0 24 24" stroke-width="1.7"><path d="M18 6 6 18"/><path d="m6 6 12 12"/></svg>
<div class="abs" style="left:1049.5px;top:141px;width:134.4px;height:90.5px;border-radius:11px;background:#f1f5f9"></div>
<svg class="abs ic" style="left:1109.7px;top:151px;width:14px;height:14px;color:#64748b;" viewBox="0 0 24 24" stroke-width="2"><ellipse cx="12" cy="5" rx="9" ry="3"/><path d="M3 5V19A9 3 0 0 0 21 19V5"/><path d="M3 12A9 3 0 0 0 21 12"/></svg>
<div class="tx" style="left:966.7px;width:300px;text-align:center;top:172.03px;font-size:16.5px;color:#0f172a;font-weight:bold;">2</div>
<div class="tx" style="left:966.7px;width:300px;text-align:center;top:201.11px;font-size:10.5px;color:#64748b;font-weight:normal;">Datasets</div>
<div class="abs" style="left:1191.9px;top:141px;width:134.4px;height:90.5px;border-radius:11px;background:#f1f5f9"></div>
<svg class="abs ic" style="left:1252.1000000000001px;top:151px;width:14px;height:14px;color:#64748b;" viewBox="0 0 24 24" stroke-width="2"><path d="M12.83 2.18a2 2 0 0 0-1.66 0L2.6 6.08a1 1 0 0 0 0 1.83l8.58 3.91a2 2 0 0 0 1.66 0l8.58-3.9a1 1 0 0 0 0-1.83Z"/><path d="m22 17.65-9.17 4.16a2 2 0 0 1-1.66 0L2 17.65"/><path d="m22 12.65-9.17 4.16a2 2 0 0 1-1.66 0L2 12.65"/></svg>
<div class="tx" style="left:1109.1000000000001px;width:300px;text-align:center;top:172.03px;font-size:16.5px;color:#0f172a;font-weight:bold;">6</div>
<div class="tx" style="left:1109.1000000000001px;width:300px;text-align:center;top:201.11px;font-size:10.5px;color:#64748b;font-weight:normal;">Pipelines</div>
<svg class="abs ic" style="left:1394.5px;top:151px;width:14px;height:14px;color:#0f172a;" viewBox="0 0 24 24" stroke-width="2"><circle cx="12" cy="12" r="10"/><circle cx="12" cy="12" r="6"/><circle cx="12" cy="12" r="2"/></svg>
<div class="tx" style="left:1251.5px;width:300px;text-align:center;top:172.03px;font-size:16.5px;color:#0f172a;font-weight:bold;">2</div>
<div class="tx" style="left:1251.5px;width:300px;text-align:center;top:201.11px;font-size:10.5px;color:#64748b;font-weight:normal;">Final Models</div>
<div class="abs" style="left:1476.7px;top:141px;width:134.4px;height:90.5px;border-radius:11px;background:#f1f5f9"></div>
<svg class="abs ic" style="left:1536.9px;top:151px;width:14px;height:14px;color:#64748b;" viewBox="0 0 24 24" stroke-width="2"><path d="M21 8a2 2 0 0 0-1-1.73l-7-4a2 2 0 0 0-2 0l-7 4A2 2 0 0 0 3 8v8a2 2 0 0 0 1 1.73l7 4a2 2 0 0 0 2 0l7-4A2 2 0 0 0 21 16Z"/><path d="m3.3 7 8.7 5 8.7-5"/><path d="M12 22V12"/></svg>
<div class="tx" style="left:1393.9px;width:300px;text-align:center;top:172.03px;font-size:16.5px;color:#0f172a;font-weight:bold;">3</div>
<div class="tx" style="left:1393.9px;width:300px;text-align:center;top:201.11px;font-size:10.5px;color:#64748b;font-weight:normal;">Trained</div>
<div class="abs" style="left:1619.1px;top:141px;width:134.4px;height:90.5px;border-radius:11px;background:#f1f5f9"></div>
<svg class="abs ic" style="left:1679.3px;top:151px;width:14px;height:14px;color:#64748b;" viewBox="0 0 24 24" stroke-width="2"><path d="M12.83 2.18a2 2 0 0 0-1.66 0L2.6 6.08a1 1 0 0 0 0 1.83l8.58 3.91a2 2 0 0 0 1.66 0l8.58-3.9a1 1 0 0 0 0-1.83Z"/><path d="m22 17.65-9.17 4.16a2 2 0 0 1-1.66 0L2 17.65"/><path d="m22 12.65-9.17 4.16a2 2 0 0 1-1.66 0L2 12.65"/></svg>
<div class="tx" style="left:1536.3px;width:300px;text-align:center;top:172.03px;font-size:16.5px;color:#0f172a;font-weight:bold;">1</div>
<div class="tx" style="left:1536.3px;width:300px;text-align:center;top:201.11px;font-size:10.5px;color:#64748b;font-weight:normal;">Folds</div>
<div class="abs" style="left:1761.5px;top:141px;width:134.4px;height:90.5px;border-radius:11px;background:#f1f5f9"></div>
<svg class="abs ic" style="left:1821.7px;top:151px;width:14px;height:14px;color:#64748b;" viewBox="0 0 24 24" stroke-width="2"><path d="M22 12H2"/><path d="M5.45 5.11 2 12v6a2 2 0 0 0 2 2h16a2 2 0 0 0 2-2v-6l-3.45-6.89A2 2 0 0 0 16.76 4H7.24a2 2 0 0 0-1.79 1.11z"/><path d="M6 16h.01"/><path d="M10 16h.01"/></svg>
<div class="tx" style="left:1678.7px;width:300px;text-align:center;top:172.03px;font-size:16.5px;color:#0f172a;font-weight:bold;">0 B</div>
<div class="tx" style="left:1678.7px;width:300px;text-align:center;top:201.11px;font-size:10.5px;color:#64748b;font-weight:normal;">Size</div>
<div class="abs" style="left:1049px;top:264px;width:847px;height:1px;background:#e2e8f0"></div>
<div class="abs" style="left:1049px;top:297px;width:847px;height:36px;border-radius:12px;background:#edf1f6"></div>
<div class="abs" style="left:1329px;top:299px;width:286.5px;height:31.5px;border-radius:14px;background:#f8fafc;border:2px solid #3b9e8b"></div>
<svg class="abs ic" style="left:1155px;top:307.5px;width:14px;height:14px;color:#64748b;" viewBox="0 0 24 24" stroke-width="2"><path d="M3 3v16a2 2 0 0 0 2 2h16"/><path d="M18 17V9"/><path d="M13 17V5"/><path d="M8 17v-3"/></svg>
<div class="tx" style="left:1175.8px;top:308.40px;font-size:13px;color:#64748b;font-weight:normal;">Overview</div>
<svg class="abs ic" style="left:1425px;top:307.5px;width:14px;height:14px;color:#0f172a;" viewBox="0 0 24 24" stroke-width="2"><path d="M6 9H4.5a2.5 2.5 0 0 1 0-5H6"/><path d="M18 9h1.5a2.5 2.5 0 0 0 0-5H18"/><path d="M4 22h16"/><path d="M10 14.66V17c0 .55-.47.98-.97 1.21C7.85 18.75 7 20.24 7 22"/><path d="M14 14.66V17c0 .55.47.98.97 1.21C16.15 18.75 17 20.24 17 22"/><path d="M18 2H6v7a6 6 0 0 0 12 0V2Z"/></svg>
<div class="tx" style="left:1446px;top:308.40px;font-size:13px;color:#0f172a;font-weight:normal;">Leaderboard</div>
<svg class="abs ic" style="left:1716.5px;top:307.5px;width:14px;height:14px;color:#64748b;" viewBox="0 0 24 24" stroke-width="2"><ellipse cx="12" cy="5" rx="9" ry="3"/><path d="M3 5V19A9 3 0 0 0 21 19V5"/><path d="M3 12A9 3 0 0 0 21 12"/></svg>
<div class="tx" style="left:1737.2px;top:308.40px;font-size:13px;color:#64748b;font-weight:normal;">Datasets</div>
<div class="abs" style="left:1049px;top:349.5px;width:199.3px;height:31px;border-radius:8px;background:#f8fafc;border:1px solid #e2e8f0"></div>
<div class="tx" style="left:1062.2px;top:358.73px;font-size:12.6px;color:#0f172a;font-weight:normal;">All datasets</div>
<svg class="abs ic" style="left:1221px;top:357.7px;width:14px;height:14px;color:#64748b;" viewBox="0 0 24 24" stroke-width="2"><path d="m6 9 6 6 6-6"/></svg>
<div class="tx" style="left:1260.8px;top:358.90px;font-size:12.4px;color:#64748b;font-weight:normal;">13 models</div>
<div class="abs" style="left:1049px;top:393px;width:847px;height:735px;overflow:hidden;border:1px solid #e2e8f0;border-bottom:none;border-radius:12px 12px 0 0">
</div>
<div class="tx" style="left:1066px;top:412.42px;font-size:12.5px;color:#64748b;font-weight:normal;">#</div>
<div class="tx" style="left:1112.6px;top:412.42px;font-size:12.5px;color:#64748b;font-weight:normal;">Model</div>
<div class="tx" style="left:1264px;top:412.42px;font-size:12.5px;color:#64748b;font-weight:normal;">Dataset</div>
<div class="tx" style="left:1358px;top:412.42px;font-size:12.5px;color:#64748b;font-weight:normal;">Preprocessing</div>
<div class="tx" style="right:346.5px;top:412.42px;font-size:12.5px;color:#64748b;font-weight:normal;">CV Val</div>
<svg class="abs ic" style="left:1576.5px;top:411px;width:12px;height:12px;color:#64748b;" viewBox="0 0 24 24" stroke-width="2"><path d="m21 16-4 4-4-4"/><path d="M17 20V4"/><path d="m3 8 4-4 4 4"/><path d="M7 4v16"/></svg>
<div class="tx" style="right:246.20000000000005px;top:412.42px;font-size:12.5px;color:#64748b;font-weight:normal;">CV Test</div>
<div class="tx" style="right:162px;top:412.42px;font-size:12.5px;color:#64748b;font-weight:normal;">Final</div>
<div class="tx" style="right:97.20000000000005px;top:412.42px;font-size:12.5px;color:#64748b;font-weight:normal;">Folds</div>
<div class="abs" style="left:1050px;top:442px;width:845px;height:1px;background:#e2e8f0"></div>
<div class="abs" style="left:0;top:0;width:1920px;height:1128px;overflow:hidden">
<div class="abs" style="left:1050px;top:500.0px;width:845px;height:1px;background:#e2e8f0"></div>
<div class="tx" style="left:1066.4px;top:465.74px;font-size:12px;color:#64748b;font-weight:normal;font-family:'Liberation Mono',monospace;">1</div>
<div class="abs" style="left:1112.2px;top:460.4px;width:58.0px;height:22px;border-radius:11px;border:1px solid #e2e8f0;background:#fbfcfd"></div>
<div class="tx" style="left:1123.6px;top:465.74px;font-size:12px;color:#0f172a;font-weight:bold;font-family:'Liberation Mono',monospace;">Ridge</div>
<div class="tx" style="left:1264px;top:465.23px;font-size:12.6px;color:#64748b;font-weight:normal;">regression</div>
<div class="tx" style="left:1358.4px;top:465.23px;font-size:12.6px;color:#64748b;font-weight:normal;">SNV</div>
<div class="tx" style="right:331px;top:465.74px;font-size:12px;color:#1e293b;font-weight:normal;font-family:'Liberation Mono',monospace;">16.0180</div>
<div class="tx" style="right:246.20000000000005px;top:465.74px;font-size:12px;color:#64748b;font-weight:normal;font-family:'Liberation Mono',monospace;">14.4578</div>
<div class="tx" style="right:162px;top:465.74px;font-size:12px;color:#64748b;font-weight:normal;font-family:'Liberation Mono',monospace;">-</div>
<div class="tx" style="right:97px;top:465.23px;font-size:12.6px;color:#64748b;font-weight:normal;">1</div>
<svg class="abs ic" style="left:1859px;top:463.4px;width:16px;height:16px;color:#64748b;" viewBox="0 0 24 24" stroke-width="2"><path d="M15 3h6v6"/><path d="M10 14 21 3"/><path d="M18 13v6a2 2 0 0 1-2 2H5a2 2 0 0 1-2-2V8a2 2 0 0 1 2-2h6"/></svg>
<div class="abs" style="left:1050px;top:558.0px;width:845px;height:1px;background:#e2e8f0"></div>
<div class="tx" style="left:1066.4px;top:523.74px;font-size:12px;color:#64748b;font-weight:normal;font-family:'Liberation Mono',monospace;">2</div>
<div class="abs" style="left:1112.2px;top:518.4px;width:58.0px;height:22px;border-radius:11px;border:1px solid #e2e8f0;background:#fbfcfd"></div>
<div class="tx" style="left:1123.6px;top:523.74px;font-size:12px;color:#0f172a;font-weight:bold;font-family:'Liberation Mono',monospace;">Ridge</div>
<div class="tx" style="left:1264px;top:523.23px;font-size:12.6px;color:#64748b;font-weight:normal;">multi</div>
<div class="tx" style="left:1358.4px;top:523.23px;font-size:12.6px;color:#64748b;font-weight:normal;">SNV</div>
<div class="tx" style="right:331px;top:523.74px;font-size:12px;color:#1e293b;font-weight:normal;font-family:'Liberation Mono',monospace;">16.0116</div>
<div class="tx" style="right:246.20000000000005px;top:523.74px;font-size:12px;color:#64748b;font-weight:normal;font-family:'Liberation Mono',monospace;">13.7796</div>
<div class="tx" style="right:162px;top:523.74px;font-size:12px;color:#64748b;font-weight:normal;font-family:'Liberation Mono',monospace;">-</div>
<div class="tx" style="right:97px;top:523.23px;font-size:12.6px;color:#64748b;font-weight:normal;">1</div>
<svg class="abs ic" style="left:1859px;top:521.4px;width:16px;height:16px;color:#64748b;" viewBox="0 0 24 24" stroke-width="2"><path d="M15 3h6v6"/><path d="M10 14 21 3"/><path d="M18 13v6a2 2 0 0 1-2 2H5a2 2 0 0 1-2-2V8a2 2 0 0 1 2-2h6"/></svg>
<div class="abs" style="left:1050px;top:559.0px;width:845px;height:57px;background:#eef5f3"></div>
<div class="abs" style="left:1050px;top:616.0px;width:845px;height:1px;background:#e2e8f0"></div>
<div class="tx" style="left:1066.4px;top:581.74px;font-size:12px;color:#64748b;font-weight:normal;font-family:'Liberation Mono',monospace;">3</div>
<div class="abs" style="left:1112.2px;top:576.4px;width:58.0px;height:22px;border-radius:11px;border:1px solid #a9dcc4;background:#eef7f2"></div>
<div class="tx" style="left:1123.6px;top:581.74px;font-size:12px;color:#23a05a;font-weight:bold;font-family:'Liberation Mono',monospace;">Ridge</div>
<div class="tx" style="left:1264px;top:581.23px;font-size:12.6px;color:#64748b;font-weight:normal;">multi</div>
<div class="tx" style="left:1358.4px;top:581.23px;font-size:12.6px;color:#64748b;font-weight:normal;">SNV</div>
<div class="tx" style="right:331px;top:581.74px;font-size:12px;color:#1e293b;font-weight:normal;font-family:'Liberation Mono',monospace;">16.0116</div>
<div class="tx" style="right:246.20000000000005px;top:581.74px;font-size:12px;color:#64748b;font-weight:normal;font-family:'Liberation Mono',monospace;">13.7796</div>
<div class="tx" style="right:162px;top:581.74px;font-size:12px;color:#30ad68;font-weight:bold;font-family:'Liberation Mono',monospace;">13.0139</div>
<div class="tx" style="right:97px;top:581.23px;font-size:12.6px;color:#64748b;font-weight:normal;">-</div>
<svg class="abs ic" style="left:1859px;top:579.4px;width:16px;height:16px;color:#64748b;" viewBox="0 0 24 24" stroke-width="2"><path d="M15 3h6v6"/><path d="M10 14 21 3"/><path d="M18 13v6a2 2 0 0 1-2 2H5a2 2 0 0 1-2-2V8a2 2 0 0 1 2-2h6"/></svg>
<div class="abs" style="left:1050px;top:674.0px;width:845px;height:1px;background:#e2e8f0"></div>
<div class="tx" style="left:1066.4px;top:639.74px;font-size:12px;color:#64748b;font-weight:normal;font-family:'Liberation Mono',monospace;">4</div>
<div class="abs" style="left:1112.2px;top:634.4px;width:115.6px;height:22px;border-radius:11px;border:1px solid #e2e8f0;background:#fbfcfd"></div>
<div class="tx" style="left:1123.6px;top:639.74px;font-size:12px;color:#0f172a;font-weight:bold;font-family:'Liberation Mono',monospace;">PLSRegression</div>
<div class="tx" style="left:1264px;top:639.23px;font-size:12.6px;color:#64748b;font-weight:normal;">multi</div>
<div class="tx" style="left:1358.4px;top:639.23px;font-size:12.6px;color:#64748b;font-weight:normal;">SNV</div>
<div class="tx" style="right:331px;top:639.74px;font-size:12px;color:#1e293b;font-weight:normal;font-family:'Liberation Mono',monospace;">14.4277</div>
<div class="tx" style="right:246.20000000000005px;top:639.74px;font-size:12px;color:#64748b;font-weight:normal;font-family:'Liberation Mono',monospace;">13.8614</div>
<div class="tx" style="right:162px;top:639.74px;font-size:12px;color:#64748b;font-weight:normal;font-family:'Liberation Mono',monospace;">-</div>
<div class="tx" style="right:97px;top:639.23px;font-size:12.6px;color:#64748b;font-weight:normal;">1</div>
<svg class="abs ic" style="left:1859px;top:637.4px;width:16px;height:16px;color:#64748b;" viewBox="0 0 24 24" stroke-width="2"><path d="M15 3h6v6"/><path d="M10 14 21 3"/><path d="M18 13v6a2 2 0 0 1-2 2H5a2 2 0 0 1-2-2V8a2 2 0 0 1 2-2h6"/></svg>
<div class="abs" style="left:1050px;top:675.0px;width:845px;height:57px;background:#eef5f3"></div>
<div class="abs" style="left:1050px;top:732.0px;width:845px;height:1px;background:#e2e8f0"></div>
<div class="tx" style="left:1066.4px;top:697.74px;font-size:12px;color:#64748b;font-weight:normal;font-family:'Liberation Mono',monospace;">5</div>
<div class="abs" style="left:1112.2px;top:692.4px;width:115.6px;height:22px;border-radius:11px;border:1px solid #a9dcc4;background:#eef7f2"></div>
<div class="tx" style="left:1123.6px;top:697.74px;font-size:12px;color:#23a05a;font-weight:bold;font-family:'Liberation Mono',monospace;">PLSRegression</div>
<div class="tx" style="left:1264px;top:697.23px;font-size:12.6px;color:#64748b;font-weight:normal;">multi</div>
<div class="tx" style="left:1358.4px;top:697.23px;font-size:12.6px;color:#64748b;font-weight:normal;">SNV</div>
<div class="tx" style="right:331px;top:697.74px;font-size:12px;color:#1e293b;font-weight:normal;font-family:'Liberation Mono',monospace;">14.4277</div>
<div class="tx" style="right:246.20000000000005px;top:697.74px;font-size:12px;color:#64748b;font-weight:normal;font-family:'Liberation Mono',monospace;">13.8614</div>
<div class="tx" style="right:162px;top:697.74px;font-size:12px;color:#30ad68;font-weight:bold;font-family:'Liberation Mono',monospace;">13.2763</div>
<div class="tx" style="right:97px;top:697.23px;font-size:12.6px;color:#64748b;font-weight:normal;">-</div>
<svg class="abs ic" style="left:1859px;top:695.4px;width:16px;height:16px;color:#64748b;" viewBox="0 0 24 24" stroke-width="2"><path d="M15 3h6v6"/><path d="M10 14 21 3"/><path d="M18 13v6a2 2 0 0 1-2 2H5a2 2 0 0 1-2-2V8a2 2 0 0 1 2-2h6"/></svg>
<div class="abs" style="left:1050px;top:790.0px;width:845px;height:1px;background:#e2e8f0"></div>
<div class="tx" style="left:1066.4px;top:755.74px;font-size:12px;color:#64748b;font-weight:normal;font-family:'Liberation Mono',monospace;">6</div>
<div class="abs" style="left:1112.2px;top:750.4px;width:115.6px;height:22px;border-radius:11px;border:1px solid #e2e8f0;background:#fbfcfd"></div>
<div class="tx" style="left:1123.6px;top:755.74px;font-size:12px;color:#0f172a;font-weight:bold;font-family:'Liberation Mono',monospace;">PLSRegression</div>
<div class="tx" style="left:1264px;top:755.23px;font-size:12.6px;color:#64748b;font-weight:normal;">regression</div>
<div class="tx" style="left:1358.4px;top:755.23px;font-size:12.6px;color:#64748b;font-weight:normal;">SNV</div>
<div class="tx" style="right:331px;top:755.74px;font-size:12px;color:#1e293b;font-weight:normal;font-family:'Liberation Mono',monospace;">14.4277</div>
<div class="tx" style="right:246.20000000000005px;top:755.74px;font-size:12px;color:#64748b;font-weight:normal;font-family:'Liberation Mono',monospace;">13.8614</div>
<div class="tx" style="right:162px;top:755.74px;font-size:12px;color:#64748b;font-weight:normal;font-family:'Liberation Mono',monospace;">-</div>
<div class="tx" style="right:97px;top:755.23px;font-size:12.6px;color:#64748b;font-weight:normal;">1</div>
<svg class="abs ic" style="left:1859px;top:753.4px;width:16px;height:16px;color:#64748b;" viewBox="0 0 24 24" stroke-width="2"><path d="M15 3h6v6"/><path d="M10 14 21 3"/><path d="M18 13v6a2 2 0 0 1-2 2H5a2 2 0 0 1-2-2V8a2 2 0 0 1 2-2h6"/></svg>
<div class="abs" style="left:1050px;top:791.0px;width:845px;height:57px;background:#eef5f3"></div>
<div class="abs" style="left:1050px;top:848.0px;width:845px;height:1px;background:#e2e8f0"></div>
<div class="tx" style="left:1066.4px;top:813.74px;font-size:12px;color:#64748b;font-weight:normal;font-family:'Liberation Mono',monospace;">7</div>
<div class="abs" style="left:1112.2px;top:808.4px;width:115.6px;height:22px;border-radius:11px;border:1px solid #a9dcc4;background:#eef7f2"></div>
<div class="tx" style="left:1123.6px;top:813.74px;font-size:12px;color:#23a05a;font-weight:bold;font-family:'Liberation Mono',monospace;">PLSRegression</div>
<div class="tx" style="left:1264px;top:813.23px;font-size:12.6px;color:#64748b;font-weight:normal;">regression</div>
<div class="tx" style="left:1358.4px;top:813.23px;font-size:12.6px;color:#64748b;font-weight:normal;">SNV</div>
<div class="tx" style="right:331px;top:813.74px;font-size:12px;color:#1e293b;font-weight:normal;font-family:'Liberation Mono',monospace;">14.4277</div>
<div class="tx" style="right:246.20000000000005px;top:813.74px;font-size:12px;color:#64748b;font-weight:normal;font-family:'Liberation Mono',monospace;">13.8614</div>
<div class="tx" style="right:162px;top:813.74px;font-size:12px;color:#30ad68;font-weight:bold;font-family:'Liberation Mono',monospace;">13.2763</div>
<div class="tx" style="right:97px;top:813.23px;font-size:12.6px;color:#64748b;font-weight:normal;">-</div>
<svg class="abs ic" style="left:1859px;top:811.4px;width:16px;height:16px;color:#64748b;" viewBox="0 0 24 24" stroke-width="2"><path d="M15 3h6v6"/><path d="M10 14 21 3"/><path d="M18 13v6a2 2 0 0 1-2 2H5a2 2 0 0 1-2-2V8a2 2 0 0 1 2-2h6"/></svg>
<div class="abs" style="left:1050px;top:906.0px;width:845px;height:1px;background:#e2e8f0"></div>
<div class="tx" style="left:1066.4px;top:871.74px;font-size:12px;color:#64748b;font-weight:normal;font-family:'Liberation Mono',monospace;">8</div>
<div class="abs" style="left:1112.2px;top:866.4px;width:50.8px;height:22px;border-radius:11px;border:1px solid #e2e8f0;background:#fbfcfd"></div>
<div class="tx" style="left:1123.6px;top:871.74px;font-size:12px;color:#0f172a;font-weight:bold;font-family:'Liberation Mono',monospace;">OPLS</div>
<div class="tx" style="left:1264px;top:871.23px;font-size:12.6px;color:#64748b;font-weight:normal;">regression</div>
<div class="tx" style="left:1358.4px;top:871.23px;font-size:12.6px;color:#64748b;font-weight:normal;">SNV</div>
<div class="tx" style="right:331px;top:871.74px;font-size:12px;color:#1e293b;font-weight:normal;font-family:'Liberation Mono',monospace;">14.0347</div>
<div class="tx" style="right:246.20000000000005px;top:871.74px;font-size:12px;color:#64748b;font-weight:normal;font-family:'Liberation Mono',monospace;">13.2921</div>
<div class="tx" style="right:162px;top:871.74px;font-size:12px;color:#64748b;font-weight:normal;font-family:'Liberation Mono',monospace;">-</div>
<div class="tx" style="right:97px;top:871.23px;font-size:12.6px;color:#64748b;font-weight:normal;">1</div>
<svg class="abs ic" style="left:1859px;top:869.4px;width:16px;height:16px;color:#64748b;" viewBox="0 0 24 24" stroke-width="2"><path d="M15 3h6v6"/><path d="M10 14 21 3"/><path d="M18 13v6a2 2 0 0 1-2 2H5a2 2 0 0 1-2-2V8a2 2 0 0 1 2-2h6"/></svg>
<div class="abs" style="left:1050px;top:907.0px;width:845px;height:57px;background:#eef5f3"></div>
<div class="abs" style="left:1050px;top:964.0px;width:845px;height:1px;background:#e2e8f0"></div>
<div class="tx" style="left:1066.4px;top:929.74px;font-size:12px;color:#64748b;font-weight:normal;font-family:'Liberation Mono',monospace;">9</div>
<div class="abs" style="left:1112.2px;top:924.4px;width:50.8px;height:22px;border-radius:11px;border:1px solid #a9dcc4;background:#eef7f2"></div>
<div class="tx" style="left:1123.6px;top:929.74px;font-size:12px;color:#23a05a;font-weight:bold;font-family:'Liberation Mono',monospace;">OPLS</div>
<div class="tx" style="left:1264px;top:929.23px;font-size:12.6px;color:#64748b;font-weight:normal;">regression</div>
<div class="tx" style="left:1358.4px;top:929.23px;font-size:12.6px;color:#64748b;font-weight:normal;">SNV</div>
<div class="tx" style="right:331px;top:929.74px;font-size:12px;color:#1e293b;font-weight:normal;font-family:'Liberation Mono',monospace;">14.0347</div>
<div class="tx" style="right:246.20000000000005px;top:929.74px;font-size:12px;color:#64748b;font-weight:normal;font-family:'Liberation Mono',monospace;">13.2921</div>
<div class="tx" style="right:162px;top:929.74px;font-size:12px;color:#30ad68;font-weight:bold;font-family:'Liberation Mono',monospace;">13.1077</div>
<div class="tx" style="right:97px;top:929.23px;font-size:12.6px;color:#64748b;font-weight:normal;">-</div>
<svg class="abs ic" style="left:1859px;top:927.4px;width:16px;height:16px;color:#64748b;" viewBox="0 0 24 24" stroke-width="2"><path d="M15 3h6v6"/><path d="M10 14 21 3"/><path d="M18 13v6a2 2 0 0 1-2 2H5a2 2 0 0 1-2-2V8a2 2 0 0 1 2-2h6"/></svg>
<div class="abs" style="left:1050px;top:1022.0px;width:845px;height:1px;background:#e2e8f0"></div>
<div class="tx" style="left:1066.4px;top:987.74px;font-size:12px;color:#64748b;font-weight:normal;font-family:'Liberation Mono',monospace;">10</div>
<div class="abs" style="left:1112.2px;top:982.4px;width:50.8px;height:22px;border-radius:11px;border:1px solid #e2e8f0;background:#fbfcfd"></div>
<div class="tx" style="left:1123.6px;top:987.74px;font-size:12px;color:#0f172a;font-weight:bold;font-family:'Liberation Mono',monospace;">OPLS</div>
<div class="tx" style="left:1264px;top:987.23px;font-size:12.6px;color:#64748b;font-weight:normal;">multi</div>
<div class="tx" style="left:1358.4px;top:987.23px;font-size:12.6px;color:#64748b;font-weight:normal;">SNV</div>
<div class="tx" style="right:331px;top:987.74px;font-size:12px;color:#1e293b;font-weight:normal;font-family:'Liberation Mono',monospace;">14.0347</div>
<div class="tx" style="right:246.20000000000005px;top:987.74px;font-size:12px;color:#64748b;font-weight:normal;font-family:'Liberation Mono',monospace;">13.2921</div>
<div class="tx" style="right:162px;top:987.74px;font-size:12px;color:#64748b;font-weight:normal;font-family:'Liberation Mono',monospace;">-</div>
<div class="tx" style="right:97px;top:987.23px;font-size:12.6px;color:#64748b;font-weight:normal;">1</div>
<svg class="abs ic" style="left:1859px;top:985.4px;width:16px;height:16px;color:#64748b;" viewBox="0 0 24 24" stroke-width="2"><path d="M15 3h6v6"/><path d="M10 14 21 3"/><path d="M18 13v6a2 2 0 0 1-2 2H5a2 2 0 0 1-2-2V8a2 2 0 0 1 2-2h6"/></svg>
<div class="abs" style="left:1050px;top:1023.0px;width:845px;height:57px;background:#eef5f3"></div>
<div class="abs" style="left:1050px;top:1080.0px;width:845px;height:1px;background:#e2e8f0"></div>
<div class="tx" style="left:1066.4px;top:1045.74px;font-size:12px;color:#64748b;font-weight:normal;font-family:'Liberation Mono',monospace;">11</div>
<div class="abs" style="left:1112.2px;top:1040.4px;width:50.8px;height:22px;border-radius:11px;border:1px solid #a9dcc4;background:#eef7f2"></div>
<div class="tx" style="left:1123.6px;top:1045.74px;font-size:12px;color:#23a05a;font-weight:bold;font-family:'Liberation Mono',monospace;">OPLS</div>
<div class="tx" style="left:1264px;top:1045.23px;font-size:12.6px;color:#64748b;font-weight:normal;">multi</div>
<div class="tx" style="left:1358.4px;top:1045.23px;font-size:12.6px;color:#64748b;font-weight:normal;">SNV</div>
<div class="tx" style="right:331px;top:1045.74px;font-size:12px;color:#1e293b;font-weight:normal;font-family:'Liberation Mono',monospace;">14.0347</div>
<div class="tx" style="right:246.20000000000005px;top:1045.74px;font-size:12px;color:#64748b;font-weight:normal;font-family:'Liberation Mono',monospace;">13.2921</div>
<div class="tx" style="right:162px;top:1045.74px;font-size:12px;color:#30ad68;font-weight:bold;font-family:'Liberation Mono',monospace;">13.1077</div>
<div class="tx" style="right:97px;top:1045.23px;font-size:12.6px;color:#64748b;font-weight:normal;">-</div>
<svg class="abs ic" style="left:1859px;top:1043.4px;width:16px;height:16px;color:#64748b;" viewBox="0 0 24 24" stroke-width="2"><path d="M15 3h6v6"/><path d="M10 14 21 3"/><path d="M18 13v6a2 2 0 0 1-2 2H5a2 2 0 0 1-2-2V8a2 2 0 0 1 2-2h6"/></svg>
<div class="abs" style="left:1050px;top:1138.0px;width:845px;height:1px;background:#e2e8f0"></div>
<div class="tx" style="left:1066.4px;top:1103.74px;font-size:12px;color:#64748b;font-weight:normal;font-family:'Liberation Mono',monospace;">12</div>
<div class="abs" style="left:1112px;top:1107.9px;width:22px;height:6px;border-radius:3px;border:1px solid #e2e8f0;background:#f8fafc"></div>
<div class="tx" style="left:1264px;top:1103.23px;font-size:12.6px;color:#64748b;font-weight:normal;">regression</div>
<div class="tx" style="left:1358.4px;top:1103.23px;font-size:12.6px;color:#64748b;font-weight:normal;">SG(polyorder=2)&gt;Gauss</div>
<div class="tx" style="right:331px;top:1103.74px;font-size:12px;color:#1e293b;font-weight:normal;font-family:'Liberation Mono',monospace;">-</div>
<div class="tx" style="right:246.20000000000005px;top:1103.74px;font-size:12px;color:#64748b;font-weight:normal;font-family:'Liberation Mono',monospace;">-</div>
<div class="tx" style="right:162px;top:1103.74px;font-size:12px;color:#64748b;font-weight:normal;font-family:'Liberation Mono',monospace;">-</div>
<div class="tx" style="right:97px;top:1103.23px;font-size:12.6px;color:#64748b;font-weight:normal;">-</div>
<svg class="abs ic" style="left:1859px;top:1101.4px;width:16px;height:16px;color:#64748b;" viewBox="0 0 24 24" stroke-width="2"><path d="M15 3h6v6"/><path d="M10 14 21 3"/><path d="M18 13v6a2 2 0 0 1-2 2H5a2 2 0 0 1-2-2V8a2 2 0 0 1 2-2h6"/></svg>
</div>
</body></html>
